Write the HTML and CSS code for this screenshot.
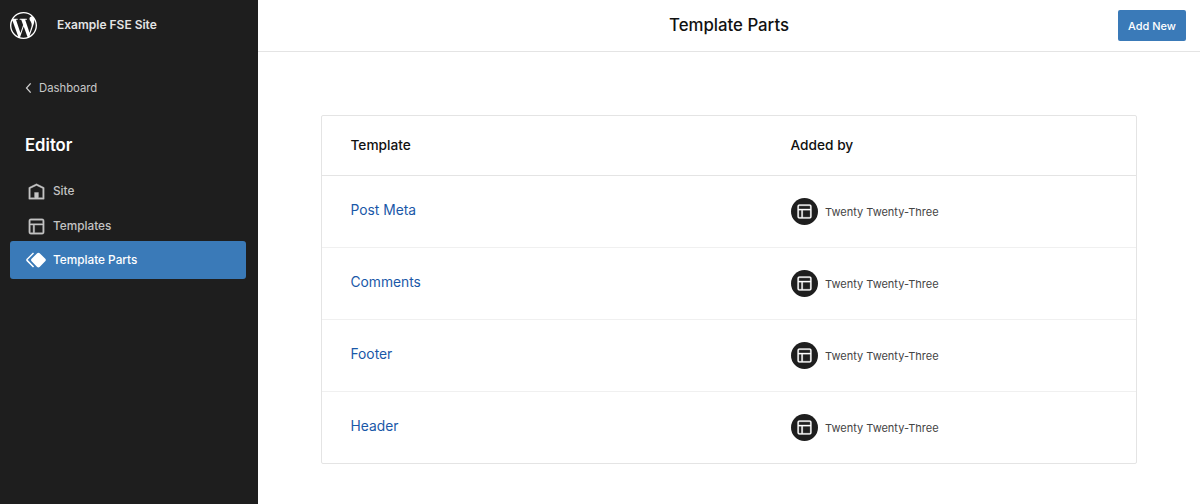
FILE: index.html
```html
<!DOCTYPE html>
<html lang="en">
<head>
<meta charset="utf-8">
<title>Template Parts</title>
<link rel="stylesheet" href="styles.css">
</head>
<body>
<div class="app">
  <aside class="sidebar">
    <div class="brand">
      <svg class="logo" viewBox="0 0 24 24"><path fill="#fff" d="M21.469 6.825c.84 1.537 1.318 3.3 1.318 5.175 0 3.979-2.156 7.456-5.363 9.325l3.295-9.527c.615-1.54.82-2.771.82-3.864 0-.405-.026-.78-.07-1.11m-7.981.105c.647-.03 1.232-.105 1.232-.105.582-.075.514-.93-.067-.899 0 0-1.755.135-2.88.135-1.064 0-2.85-.15-2.85-.15-.585-.03-.661.855-.075.885 0 0 .54.061 1.125.09l1.68 4.605-2.37 7.08L5.354 6.9c.649-.03 1.234-.1 1.234-.1.585-.075.516-.93-.065-.896 0 0-1.746.138-2.874.138-.2 0-.438-.008-.69-.015C4.911 3.15 8.235 1.215 12 1.215c2.809 0 5.365 1.072 7.286 2.833-.046-.003-.091-.009-.141-.009-1.06 0-1.812.923-1.812 1.914 0 .89.513 1.643 1.06 2.531.411.72.89 1.643.89 2.977 0 .915-.354 1.994-.821 3.479l-1.075 3.585-3.9-11.61.001.014zM12 22.784c-1.059 0-2.081-.153-3.048-.437l3.237-9.406 3.315 9.087c.024.053.05.101.078.149-1.12.393-2.325.609-3.582.609M1.211 12c0-1.564.336-3.05.935-4.39L7.29 21.709C3.694 19.96 1.212 16.271 1.211 12M12 0C5.385 0 0 5.385 0 12s5.385 12 12 12 12-5.385 12-12S18.615 0 12 0"/></svg>
      <span class="site-name">Example FSE Site</span>
    </div>
    <a class="back" href="#">
      <svg class="chevron" viewBox="0 0 24 24"><path d="M14.6 7l-1.2-1L8 12l5.4 6 1.2-1-4.6-5z"/></svg>
      <span>Dashboard</span>
    </a>
    <h2 class="section-title">Editor</h2>
    <nav class="nav">
      <a class="nav-item" href="#">
        <svg class="nav-icon" viewBox="0 0 24 24"><path d="M12 4L4 7.9V20h16V7.9L12 4zm6.5 14.5H14V13h-4v5.5H5.5V8.8L12 5.7l6.5 3.1v9.7z"/></svg>
        <span>Site</span>
      </a>
      <a class="nav-item" href="#">
        <svg class="nav-icon" viewBox="0 0 24 24"><path d="M18 5.5H6a.5.5 0 00-.5.5v3h13V6a.5.5 0 00-.5-.5zm.5 5H10v8h8a.5.5 0 00.5-.5v-7.5zm-10 0h-3V18a.5.5 0 00.5.5h2.5v-8zM6 4h12a2 2 0 012 2v12a2 2 0 01-2 2H6a2 2 0 01-2-2V6a2 2 0 012-2z"/></svg>
        <span>Templates</span>
      </a>
      <a class="nav-item active" href="#">
        <svg class="nav-icon" viewBox="0 0 24 24"><path d="M21.3 10.8l-5.6-5.6c-.7-.7-1.8-.7-2.5 0l-5.6 5.6c-.7.7-.7 1.8 0 2.5l5.6 5.6c.3.3.8.5 1.2.5s.9-.2 1.2-.5l5.6-5.6c.8-.7.8-1.9.1-2.5zm-17.6 1L10 5.5l-1-1-6.3 6.3c-.7.7-.7 1.8 0 2.5L9 19.5l1.1-1.1-6.3-6.3c-.2 0-.2-.2-.1-.3z"/></svg>
        <span>Template Parts</span>
      </a>
    </nav>
  </aside>
  <main class="main">
    <header class="topbar">
      <h1 class="page-title">Template Parts</h1>
      <a class="add-new" href="#">Add New</a>
    </header>
    <section class="content">
      <div class="table">
        <div class="row head">
          <div class="col-name">Template</div>
          <div class="col-by">Added by</div>
        </div>
        <div class="row">
          <a class="col-name link" href="#">Post Meta</a>
          <div class="col-by author">
            <span class="badge"><svg viewBox="0 0 24 24"><path d="M18 5.5H6a.5.5 0 00-.5.5v3h13V6a.5.5 0 00-.5-.5zm.5 5H10v8h8a.5.5 0 00.5-.5v-7.5zm-10 0h-3V18a.5.5 0 00.5.5h2.5v-8zM6 4h12a2 2 0 012 2v12a2 2 0 01-2 2H6a2 2 0 01-2-2V6a2 2 0 012-2z"/></svg></span>
            <span>Twenty Twenty-Three</span>
          </div>
        </div>
        <div class="row">
          <a class="col-name link" href="#">Comments</a>
          <div class="col-by author">
            <span class="badge"><svg viewBox="0 0 24 24"><path d="M18 5.5H6a.5.5 0 00-.5.5v3h13V6a.5.5 0 00-.5-.5zm.5 5H10v8h8a.5.5 0 00.5-.5v-7.5zm-10 0h-3V18a.5.5 0 00.5.5h2.5v-8zM6 4h12a2 2 0 012 2v12a2 2 0 01-2 2H6a2 2 0 01-2-2V6a2 2 0 012-2z"/></svg></span>
            <span>Twenty Twenty-Three</span>
          </div>
        </div>
        <div class="row">
          <a class="col-name link" href="#">Footer</a>
          <div class="col-by author">
            <span class="badge"><svg viewBox="0 0 24 24"><path d="M18 5.5H6a.5.5 0 00-.5.5v3h13V6a.5.5 0 00-.5-.5zm.5 5H10v8h8a.5.5 0 00.5-.5v-7.5zm-10 0h-3V18a.5.5 0 00.5.5h2.5v-8zM6 4h12a2 2 0 012 2v12a2 2 0 01-2 2H6a2 2 0 01-2-2V6a2 2 0 012-2z"/></svg></span>
            <span>Twenty Twenty-Three</span>
          </div>
        </div>
        <div class="row">
          <a class="col-name link" href="#">Header</a>
          <div class="col-by author">
            <span class="badge"><svg viewBox="0 0 24 24"><path d="M18 5.5H6a.5.5 0 00-.5.5v3h13V6a.5.5 0 00-.5-.5zm.5 5H10v8h8a.5.5 0 00.5-.5v-7.5zm-10 0h-3V18a.5.5 0 00.5.5h2.5v-8zM6 4h12a2 2 0 012 2v12a2 2 0 01-2 2H6a2 2 0 01-2-2V6a2 2 0 012-2z"/></svg></span>
            <span>Twenty Twenty-Three</span>
          </div>
        </div>
      </div>
    </section>
  </main>
</div>
</body>
</html>
```
FILE: styles.css
```css
* { box-sizing: border-box; }
html, body { margin: 0; height: 100%; overflow: hidden; }
body { font-family: Inter, "Noto Sans", "Liberation Sans", sans-serif; background: #fff; color: #000; }
a { text-decoration: none; color: inherit; }
.app { display: flex; height: 504px; }

.sidebar { width: 258px; flex: none; background: #1e1e1e; color: #e0e0e0; padding: 12px 12px 0 10px; }
.brand { display: flex; align-items: center; height: 27px; }
.logo { width: 27px; height: 27px; flex: none; }
.site-name { margin-left: 20px; font-size: 12px; font-weight: 600; color: #e4e4e4; position: relative; top: -1px; }
.back { display: flex; align-items: center; margin: 37px 0 0 9px; height: 24px; font-size: 11.3px; font-weight: 400; color: #c8c8c8; }
.chevron { width: 20px; height: 20px; fill: #d0d0d0; flex: none; }
.section-title { margin: 34px 0 0 15px; font-size: 16.7px; line-height: 22px; font-weight: 600; color: #fff; }
.nav { display: flex; flex-direction: column; margin-top: 17px; width: 236px; }
.nav-item { display: flex; align-items: center; height: 36px; padding-left: 15px; font-size: 11.8px; font-weight: 500; color: #c4c4c4; border-radius: 3px; }
.nav-item + .nav-item { margin-top: -1px; }
.nav-item.active { height: 38px; margin-top: -3px; padding-left: 14px; background: #3a7ab8; color: #fff; }
.nav-icon { width: 23px; height: 23px; fill: currentColor; stroke: currentColor; stroke-width: 0.4; margin-right: 5px; flex: none; }
.nav-item.active .nav-icon { width: 24px; height: 24px; stroke-width: 0; }

.main { flex: 1; min-width: 0; display: flex; flex-direction: column; }
.topbar { position: relative; height: 52px; flex: none; display: flex; align-items: center; justify-content: center; border-bottom: 1px solid #e4e4e4; }
.page-title { margin: 0; font-size: 16.8px; font-weight: 500; color: #111; position: relative; top: -1px; }
.add-new { position: absolute; right: 14px; top: 10px; width: 68px; height: 31px; display: flex; align-items: center; justify-content: center; background: #3a7ab8; color: #fff; font-size: 11px; font-weight: 500; border-radius: 2px; }

.content { padding: 63px 62px 0 63px; }
.table { border: 1px solid #e4e4e4; border-radius: 2px; width: 816px; }
.row { display: flex; align-items: center; height: 72px; padding-left: 28.5px; border-top: 1px solid #f0f0f0; }
.row.head { height: 60px; border-top: 0; border-bottom: 1px solid #e4e4e4; font-size: 13.7px; font-weight: 500; color: #111; }
.row.head > div { position: relative; top: -1px; }
.row.head + .row { border-top: 0; height: 71px; }
.col-name { width: 440px; flex: none; }
.link { font-size: 13.8px; font-weight: 400; color: #1a58a8; position: relative; top: -1.5px; }
.author { display: flex; align-items: center; font-size: 11px; color: #444; }
.badge { width: 27px; height: 27px; border-radius: 50%; background: #1e1e1e; display: flex; align-items: center; justify-content: center; margin-right: 7.5px; flex: none; }
.badge svg { width: 21px; height: 21px; fill: #fff; stroke: #fff; stroke-width: 0.3; }
```
